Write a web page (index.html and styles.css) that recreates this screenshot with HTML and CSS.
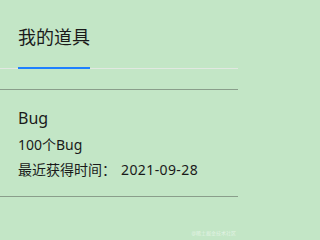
FILE: index.html
```html
<!DOCTYPE html>
<html lang="zh-CN">
<head>
<meta charset="utf-8">
<link rel="stylesheet" href="styles.css">
</head>
<body>
<div class="page">
  <div class="tabs">
    <div class="tab active">我的道具</div>
  </div>
  <div class="divider divider-top"></div>
  <div class="item">
    <div class="item-name">Bug</div>
    <div class="item-row">100个Bug</div>
    <div class="item-row">最近获得时间：<span class="date">2021-09-28</span></div>
  </div>
  <div class="divider"></div>
  <div class="watermark">@稀土掘金技术社区</div>
</div>
</body>
</html>
```
FILE: styles.css
```css
html, body {
  margin: 0;
  padding: 0;
  background: #c3e6c6;
}
.page {
  position: relative;
  width: 238px;
  height: 238px;
  overflow: hidden;
  font-family: "Noto Sans", "Noto Sans CJK SC", sans-serif;
  color: #1a1a1a;
}
.tabs {
  display: flex;
  padding: 0 18px;
  border-bottom: 1px solid #e2e8e2;
}
.tab {
  font-size: 18px;
  line-height: 28px;
  padding-top: 23px;
  padding-bottom: 16px;
  margin-bottom: -1px;
}
.tab.active {
  border-bottom: 2px solid #1e80ff;
}
.divider {
  height: 1px;
  background: #8a9e8b;
}
.divider-top {
  margin-top: 20px;
}
.item {
  padding: 16px 18px 14px;
}
.item-name {
  font-size: 16px;
  line-height: 24px;
  margin-bottom: 2px;
}
.item-row {
  font-size: 14px;
  line-height: 25px;
}
.date {
  margin-left: 5px;
  letter-spacing: 0.4px;
}
.watermark {
  position: absolute;
  right: 2px;
  bottom: 2px;
  font-size: 5px;
  line-height: 6px;
  color: rgba(255, 255, 255, 0.55);
}
```
